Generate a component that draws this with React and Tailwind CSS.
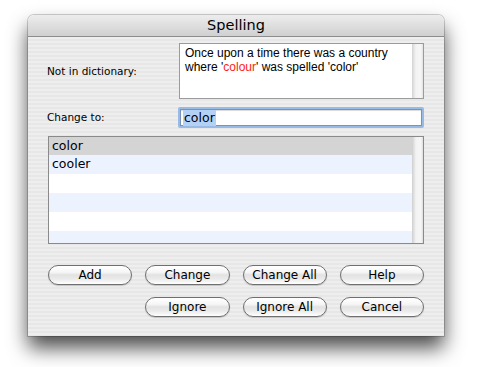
const ui = { fontFamily: '"DejaVu Sans", "Liberation Sans", sans-serif' }
const helv = { fontFamily: '"Liberation Sans", Arial, sans-serif' }

function AquaButton({ children }) {
  return (
    <button
      className="h-[20px] w-full rounded-full border border-[#6f6f6f] bg-[linear-gradient(to_bottom,#ffffff_0%,#f6f6f6_35%,#e2e2e2_50%,#ececec_75%,#ffffff_100%)] text-[12px] leading-none text-black shadow-[0_1px_1px_rgba(0,0,0,0.18)]"
      style={ui}
    >
      {children}
    </button>
  )
}

const rows = ["color", "cooler", "", "", "", ""]

export default function App() {
  return (
    <div className="h-[367px] w-[478px] bg-white pl-[28px] pt-[15px]">
      <div className="flex h-[321px] w-[416px] flex-col overflow-hidden rounded-t-[6px] shadow-[0_0_0_1px_rgba(0,0,0,0.18),0_12px_20px_rgba(0,0,0,0.7)]">
        <div
          className="flex h-[22px] shrink-0 items-center justify-center border-b border-[#8d8d8d] bg-[linear-gradient(to_bottom,#ededed,#d0d0d0)] text-[14.5px] text-black"
          style={ui}
        >
          Spelling
        </div>

        <div className="flex flex-1 flex-col bg-[image:repeating-linear-gradient(to_bottom,#eeeeee_0px,#eeeeee_2px,#e7e7e7_2px,#e7e7e7_4px)] px-[20px] pt-[6px]">
          <div className="flex">
            <div className="flex w-[131px] items-center pt-[2px] text-[10.5px] text-black" style={ui}>
              <span className="-ml-px">Not in dictionary:</span>
            </div>
            <div className="flex h-[56px] w-[245px] border border-[#9b9b9b] bg-white">
              <div className="flex-1 pl-[5px] pt-[2px] text-[12px] leading-[14px] text-black" style={helv}>
                Once upon a time there was a country
                <br />
                where '<span className="text-[#ff1a1a]">colour</span>' was spelled 'color'
              </div>
              <div className="w-[11px] bg-[linear-gradient(to_right,#d4d4d4,#f3f3f3_35%,#f6f6f6_80%,#e2e2e2)]" />
            </div>
          </div>

          <div className="mt-[8px] flex items-center">
            <div className="w-[130px] text-[10.5px] text-black" style={ui}>
              <span className="-ml-px">Change to:</span>
            </div>
            <div className="h-[21px] w-[246px] rounded-[2px] bg-[#98bbe6] p-[2px]">
              <div className="flex h-full items-center border border-[#7793ba] bg-white pl-[2px] shadow-[inset_0_1px_1px_rgba(0,0,0,0.15)]">
                <span className="bg-[#b3d1f5] px-px text-[12.5px] leading-[16px] text-black" style={ui}>
                  color
                </span>
              </div>
            </div>
          </div>

          <div className="mt-[8px] flex h-[108px] w-[376px] overflow-hidden border border-[#8a8a8a] bg-white">
            <div className="flex-1">
              {rows.map((r, i) => (
                <div
                  key={i}
                  className={
                    i === 0
                      ? "flex h-[18px] items-center bg-[#d4d4d4] pl-[3px] text-[12.5px] text-black"
                      : i % 2 === 1
                        ? "flex h-[19px] items-center bg-[#edf3fe] pl-[3px] text-[12.5px] text-black"
                        : "flex h-[19px] items-center bg-white pl-[3px] text-[12.5px] text-black"
                  }
                  style={ui}
                >
                  {r}
                </div>
              ))}
            </div>
            <div className="w-[11px] bg-[linear-gradient(to_right,#cfcfcf,#f2f2f2_35%,#f6f6f6_80%,#dedede)]" />
          </div>

          <div className="mt-[21px] grid w-[376px] grid-cols-4 gap-x-[13px] gap-y-[12px]">
            <AquaButton>Add</AquaButton>
            <AquaButton>Change</AquaButton>
            <AquaButton>Change All</AquaButton>
            <AquaButton>Help</AquaButton>
            <div />
            <AquaButton>Ignore</AquaButton>
            <AquaButton>Ignore All</AquaButton>
            <AquaButton>Cancel</AquaButton>
          </div>
        </div>
      </div>
    </div>
  )
}
